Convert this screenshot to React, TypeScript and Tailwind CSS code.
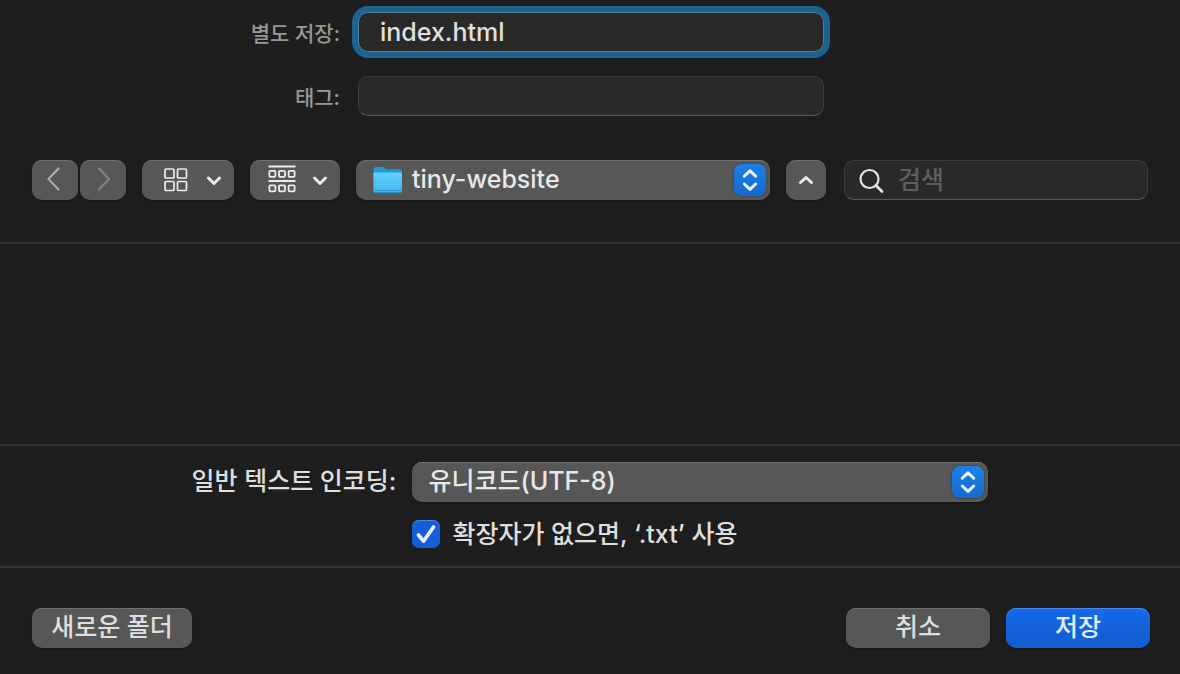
import { useState } from "react";
import type { ReactNode } from "react";

const raised =
  "rounded-[10px] bg-[#575757] shadow-[inset_0_1px_0_#707070,0_1px_2px_rgba(0,0,0,0.35)]";

const field =
  "h-10 w-full min-w-0 rounded-[10px] border border-[#3c3c3c] border-b-[#5a5a5a] bg-[#292929] text-[#e4e4e4] outline-none";

function Stepper() {
  return (
    <span className="pointer-events-none absolute right-1 top-1 flex h-8 w-8 items-center justify-center rounded-lg bg-linear-to-b from-[#1b80e6] to-[#146ad0] shadow-[0_0_2px_rgba(0,0,0,0.5)]">
      <svg width="32" height="32" viewBox="0 0 32 32" fill="none" stroke="#e8f3ff" strokeWidth="3" strokeLinecap="round" strokeLinejoin="round" aria-hidden="true">
        <path d="M10.300 12.200 16 6.800l5.700 5.400M10.300 20 16 25.400l5.700-5.400" />
      </svg>
    </span>
  );
}

function Chevron({ up = false }: { up?: boolean }) {
  return (
    <svg width="16" height="10" viewBox="0 0 16 10" fill="none" stroke="#ececec" strokeWidth="3" strokeLinecap="round" strokeLinejoin="round" aria-hidden="true">
      <path d={up ? "M2.500 7.500 8 2.500l5.500 5" : "M2.500 3 8 8.500 13.500 3"} />
    </svg>
  );
}

function GridIcon() {
  return (
    <svg width="24" height="24" viewBox="0 0 24 24" fill="none" stroke="#ececec" strokeWidth="1.700" aria-hidden="true">
      <rect x="1" y="1" width="9" height="9" rx="1" />
      <rect x="13.500" y="1" width="9" height="9" rx="1" />
      <rect x="1" y="13.500" width="9" height="9" rx="1" />
      <rect x="13.500" y="13.500" width="9" height="9" rx="1" />
    </svg>
  );
}

function GroupIcon() {
  return (
    <svg width="28" height="30" viewBox="0 0 28 30" fill="none" stroke="#ececec" strokeWidth="1.800" aria-hidden="true">
      <path d="M.5 1.500h27M.5 16h27" />
      {[1.4, 11, 20.6].map((x) => (
        <g key={x}>
          <rect x={x} y="5.800" width="6" height="6" rx="1" />
          <rect x={x} y="20.300" width="6" height="6" rx="1" />
        </g>
      ))}
    </svg>
  );
}

function FolderIcon() {
  return (
    <svg className="pointer-events-none absolute left-4 top-1.5" width="32" height="30" viewBox="0 0 32 30" aria-hidden="true">
      <defs>
        <linearGradient id="folder" x1="0" y1="0" x2="0" y2="1">
          <stop offset="0" stopColor="#63d0fb" />
          <stop offset="1" stopColor="#40b5ee" />
        </linearGradient>
      </defs>
      <path d="M1.500 3.500Q1.500 1 4 1h6q1.500 0 2.500 1t2.500 1.200h12.500Q30 3.200 30 5.500V26H1.500z" fill="#1f9bd3" />
      <path d="M1.500 7.500q0-1 1-1H29q1 0 1 1V25q0 2-2 2H3.500q-2 0-2-2z" fill="url(#folder)" />
      <path d="M1.500 24.500H30" stroke="#2b95cd" />
      <path d="M3 26.800h26" stroke="#1f7fb5" />
    </svg>
  );
}

function NavButton({ label, children }: { label: string; children: ReactNode }) {
  return (
    <button type="button" aria-label={label} className={`flex h-10 w-[46px] items-center justify-center pb-0.5 ${raised}`}>
      <svg width="16" height="24" viewBox="0 0 16 24" fill="none" strokeWidth="2.200" strokeLinecap="round" strokeLinejoin="round" aria-hidden="true">
        {children}
      </svg>
    </button>
  );
}

export default function App() {
  const [name, setName] = useState("index.html");
  const [useTxt, setUseTxt] = useState(true);

  return (
    <form className="flex min-h-screen w-full flex-col bg-[#1e1e1e] font-['Inter','Noto_Sans_CJK_KR',sans-serif] text-[25px] font-medium leading-9 text-[#dedede]">
      <section className="grid grid-cols-[1fr_466px_1fr] items-center gap-x-[18px] gap-y-6 pl-0.5 pt-3">
        <label htmlFor="name" className="pt-1 text-right text-[21px] text-[#989898]">별도 저장:</label>
        <input
          id="name"
          value={name}
          onChange={(e) => setName(e.target.value)}
          className="h-10 w-full min-w-0 rounded-[10px] border border-[#4c8099] bg-[#292929] pl-[21px] text-[#e0e0e0] shadow-[0_0_0_6px_#1c6391] outline-none"
        />
        <label htmlFor="tags" className="col-start-1 pt-1 text-right text-[21px] text-[#989898]">태그:</label>
        <input id="tags" className={`${field} pl-5`} />
      </section>

      <section className="flex items-center gap-4 px-8 pb-[42px] pt-11">
        <div className="flex gap-0.5">
          <NavButton label="뒤로"><path d="M11.500 1.500 1.500 12l10 10.500" stroke="#aaaaaa" /></NavButton>
          <NavButton label="앞으로"><path d="M4 1.500 14 12 4 22.500" stroke="#838383" /></NavButton>
        </div>
        <button type="button" aria-label="보기" className={`flex h-10 w-[92px] items-center justify-end gap-[18px] pr-3 ${raised}`}>
          <GridIcon />
          <Chevron />
        </button>
        <button type="button" aria-label="그룹" className={`flex h-10 w-[90px] items-center justify-end gap-4 pr-3 ${raised}`}>
          <GroupIcon />
          <Chevron />
        </button>
        <div className="relative min-w-0 flex-1">
          <select aria-label="위치" className={`block h-10 w-full appearance-none pb-0.5 pl-14 pr-10 text-[#e8e8e8] outline-none ${raised}`}>
            <option>tiny-website</option>
          </select>
          <FolderIcon />
          <Stepper />
        </div>
        <button type="button" aria-label="접기" className={`flex h-10 w-10 items-center justify-center ${raised}`}>
          <Chevron up />
        </button>
        <div className="relative w-[306px] pl-0.5">
          <input type="search" aria-label="검색" placeholder="검색" className={`${field} pl-[53px] pr-3 placeholder:text-[#5e5e5e]`} />
          <svg className="pointer-events-none absolute left-4 top-2" width="26" height="26" viewBox="0 0 26 26" fill="none" stroke="#e2e2e2" strokeLinecap="round" aria-hidden="true">
            <circle cx="11.500" cy="11" r="9" strokeWidth="2.200" />
            <path d="m18 17.500 6 6" strokeWidth="2.800" />
          </svg>
        </div>
      </section>

      <section aria-label="파일 목록" className="min-h-[204px] flex-1 border-y-2 border-[#323232]" />

      <section className="grid grid-cols-[auto_576px] items-center justify-center gap-x-4 gap-y-[18px] border-b-2 border-[#323232] pb-[18px] pt-4">
        <label htmlFor="encoding" className="pb-0.5 text-right">일반 텍스트 인코딩:</label>
        <div className="relative">
          <select id="encoding" className={`block h-10 w-full appearance-none pb-0.5 pl-4 pr-10 text-[#e8e8e8] outline-none ${raised}`}>
            <option>유니코드(UTF-8)</option>
          </select>
          <Stepper />
        </div>
        <label className="relative col-start-2 flex h-7 items-center gap-3">
          <input
            type="checkbox"
            checked={useTxt}
            onChange={(e) => setUseTxt(e.target.checked)}
            className="peer h-7 w-7 shrink-0 appearance-none rounded-[7px] bg-[#575757] shadow-[inset_0_1px_0_#4a85ea] checked:bg-[#145fd8]"
          />
          <svg className="pointer-events-none absolute left-0 top-0 hidden peer-checked:block" width="28" height="28" viewBox="0 0 28 28" fill="none" stroke="#ecf3ff" strokeWidth="3.600" strokeLinecap="round" strokeLinejoin="round" aria-hidden="true">
            <path d="m6.500 15 5 6.200L21.500 7" />
          </svg>
          <span>확장자가 없으면, ‘.txt’ 사용</span>
        </label>
      </section>

      <footer className="flex gap-4 pb-[26px] pl-8 pr-[30px] pt-10">
        <button type="button" className={`h-10 w-40 pb-0.5 ${raised}`}>새로운 폴더</button>
        <button type="button" className={`ml-auto h-10 w-36 pb-0.5 ${raised}`}>취소</button>
        <button type="submit" className="h-10 w-36 rounded-[10px] bg-linear-to-b from-[#1669e8] to-[#125cce] pb-0.5 text-[#e2eeff] shadow-[inset_0_1px_0_#4a8af0,0_1px_2px_rgba(0,0,0,0.4)]">저장</button>
      </footer>
    </form>
  );
}
